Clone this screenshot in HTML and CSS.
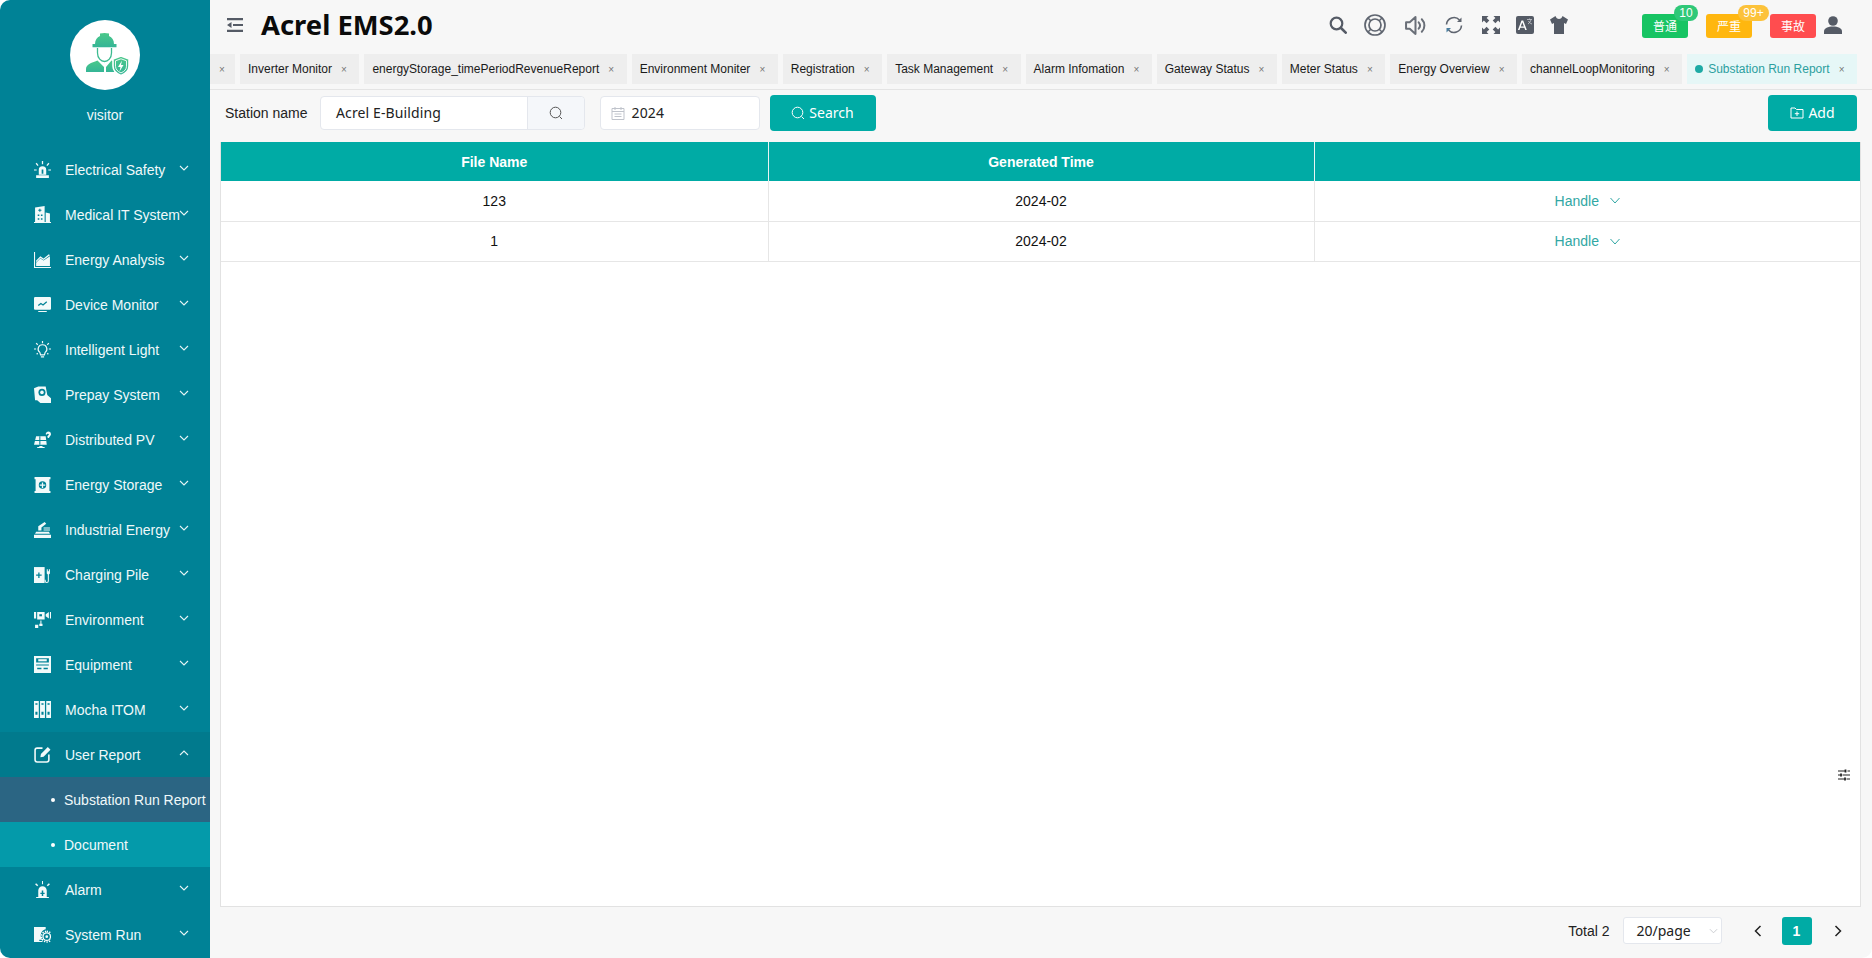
FILE: index.html
```html
<!DOCTYPE html>
<html lang="en">
<head>
<meta charset="utf-8">
<title>Acrel EMS2.0</title>
<link rel="stylesheet" href="styles.css">
</head>
<body>
<div class="app">
  <aside class="sidebar">
    <div class="profile">
      <div class="avatar">
        <svg width="70" height="70" viewBox="0 0 70 70">
          <defs><linearGradient id="ag" x1="0" y1="0" x2="0" y2="1"><stop offset="0" stop-color="#4bc98a"/><stop offset="1" stop-color="#35b596"/></linearGradient></defs>
          <path fill="url(#ag)" d="M25 24c0-4 2-6.500 5-8v-2.500c3-.8 6-.8 9 0V16c3 1.500 5 4 5 8h2.500v3.200h-24V24z"/>
          <path fill="none" stroke="#3cbb90" stroke-width="1.300" d="M27.500 28v5c0 5 3.500 8.500 7 8.500s7-3.500 7-8.500v-5"/>
          <path fill="url(#ag)" d="M16 52v-3c0-4.500 5-6 11.500-8.500L34 47v5zM36 52v-5l5.500-6.500 3 1V52z"/>
          <path fill="url(#ag)" stroke="#fff" stroke-width="1.600" d="M51 36l8 3v7c0 4.500-3 7.500-8 9.500-5-2-8-5-8-9.500v-7z"/>
          <path fill="none" stroke="#fff" stroke-width=".9" d="M51 38.800l5.500 2v5.400c0 3-2 5.200-5.500 6.700-3.500-1.500-5.500-3.700-5.500-6.700v-5.400z"/>
          <path fill="#fff" d="M52 40.500L48 47h2.500l-1 4.500 4-6.500H51z"/>
        </svg>
      </div>
      <div class="visitor">visitor</div>
    </div>
    <nav class="menu">
      <a class="item"><svg class="ico" viewBox="0 0 16 16"><path d="M4.500 13V8.500a3.500 3.500 0 017 0V13zM2 13.500h12V16H2zM7.400 0h1.200v3H7.400zM1.500 2.500l1-.8L4.300 4l-.9.800zM14.500 2.500l-1-.8L11.700 4l.9.800zM0 8h2.500v1H0zM13.500 8H16v1h-2.500z"/><path fill="#008296" d="M7.200 8h1.600v4H7.200z"/></svg><span class="label">Electrical Safety</span><svg class="chev" viewBox="0 0 10 6"><path d="M1 1l4 4 4-4"/></svg></a>
      <a class="item"><svg class="ico" viewBox="0 0 16 16"><path d="M1 15V1.500L10 0v15zM11 6l4 1v8h-4zM0 15h16v1H0z"/><path fill="#008296" d="M5 2.500h1v1h1v1H6v1H5v-1H4v-1h1zM3.500 8h1.500v1.500H3.500zM6.500 8H8v1.500H6.500zM3.500 11.500h1.500V13H3.500zM6.500 11.500H8V13H6.500z"/></svg><span class="label">Medical IT System</span><svg class="chev" viewBox="0 0 10 6"><path d="M1 1l4 4 4-4"/></svg></a>
      <a class="item"><svg class="ico" viewBox="0 0 16 16"><path d="M0 1h1v14h15v1H0zM2 14v-3l4-4 3 2 6-4v9zM2 9l4-4 3 2 5-4 1 1-6 4.500-3-2-4 4z"/></svg><span class="label">Energy Analysis</span><svg class="chev" viewBox="0 0 10 6"><path d="M1 1l4 4 4-4"/></svg></a>
      <a class="item"><svg class="ico" viewBox="0 0 16 16"><path d="M1 1h14a1 1 0 011 1v10a1 1 0 01-1 1H1a1 1 0 01-1-1V2a1 1 0 011-1zM4 14h8v1H4z"/><path fill="none" stroke="#008296" stroke-width="1.200" d="M4 9l2.500-2 2 1.500L12 5.500"/></svg><span class="label">Device Monitor</span><svg class="chev" viewBox="0 0 10 6"><path d="M1 1l4 4 4-4"/></svg></a>
      <a class="item"><svg class="ico line" viewBox="0 0 16 16"><path d="M8 3.500a4 4 0 00-2.500 7.200l.7 2.300h3.600l.7-2.300A4 4 0 008 3.500zM6.500 15h3M8 0v2M2 2l1.500 1.500M14 2l-1.500 1.500M0 7.500h2M14 7.500h2M2.500 12.500l1-1M13.500 12.500l-1-1"/></svg><span class="label">Intelligent Light</span><svg class="chev" viewBox="0 0 10 6"><path d="M1 1l4 4 4-4"/></svg></a>
      <a class="item"><svg class="ico" viewBox="0 0 16 16"><path d="M0 2l4-1.500h7l1.500 8 3.500 3V16H6l-3-2.500H1z"/><circle cx="7.500" cy="6" r="3.300" fill="#008296"/><circle cx="7.500" cy="6" r="1.700"/></svg><span class="label">Prepay System</span><svg class="chev" viewBox="0 0 10 6"><path d="M1 1l4 4 4-4"/></svg></a>
      <a class="item"><svg class="ico" viewBox="0 0 16 16"><path d="M2 5h9l1 8H0zM5 14h3v1h2v1H3v-1h2zM11 3a2.500 2.500 0 114 2l-1 1.500h-1L12.500 5l1.500-1.500a1 1 0 00-2 0z"/><path fill="none" stroke="#008296" d="M5.500 5v8M1 9h11"/></svg><span class="label">Distributed PV</span><svg class="chev" viewBox="0 0 10 6"><path d="M1 1l4 4 4-4"/></svg></a>
      <a class="item"><svg class="ico" viewBox="0 0 16 16"><path d="M.5 1h15v2h-1v11h1v2H.5v-2h1V3h-1z"/><circle cx="8" cy="8.500" r="3.500" fill="#008296"/><path d="M7.400 6h1.200v2h2v1.200h-2v2H7.400v-2h-2V8h2z"/></svg><span class="label">Energy Storage</span><svg class="chev" viewBox="0 0 10 6"><path d="M1 1l4 4 4-4"/></svg></a>
      <a class="item"><svg class="ico" viewBox="0 0 16 16"><path d="M0 16v-3h16v3zM1 12l1-2h12l1 2zM4 9V5l6-4 1.500 1.500L7 6v3zM9 6h6v1H9zM9 8h6v1H9z"/></svg><span class="label">Industrial Energy</span><svg class="chev" viewBox="0 0 10 6"><path d="M1 1l4 4 4-4"/></svg></a>
      <a class="item"><svg class="ico" viewBox="0 0 16 16"><path d="M0 1h10v15H0z"/><path fill="#008296" d="M2 8h2V6h1.200v2h2v1.200h-2v2H4v-2H2z"/><path d="M12 3h1v2h1V3h1v4l-1 1v6a2 2 0 01-4 0v-1h1v1a1 1 0 002 0V8l-1-1z"/></svg><span class="label">Charging Pile</span><svg class="chev" viewBox="0 0 10 6"><path d="M1 1l4 4 4-4"/></svg></a>
      <a class="item"><svg class="ico" viewBox="0 0 16 16"><path d="M0 1h2v6H0zM3 1h7v7H3zM11 3l3-2v6l-3-2zM15 1h1v6h-1zM6 9h1v3h-1zM1 13h3v3H1zM5 12h3v2H5z"/><path fill="#008296" d="M5 3h2.500v2H5z"/></svg><span class="label">Environment</span><svg class="chev" viewBox="0 0 10 6"><path d="M1 1l4 4 4-4"/></svg></a>
      <a class="item"><svg class="ico" viewBox="0 0 16 16"><path d="M0 0h16v16H0z"/><path fill="#008296" d="M2 2h12v4H2zM2 8h12v1H2zM3 11h4v1.500H3zM9 11h4v1.500H9z"/><path d="M4 3h8v2H4z"/></svg><span class="label">Equipment</span><svg class="chev" viewBox="0 0 10 6"><path d="M1 1l4 4 4-4"/></svg></a>
      <a class="item"><svg class="ico" viewBox="0 0 16 16"><path d="M0 0h4.500v16H0zM5.700 0h4.600v16H5.700zM11.500 0H16v16h-4.500z"/><path fill="#008296" d="M1.300 2h2v1.500h-2zM7 2h2v1.500H7zM12.700 2h2v1.500h-2zM1.300 10h2v3h-2zM7 10h2v3H7zM12.700 10h2v3h-2z"/></svg><span class="label">Mocha ITOM</span><svg class="chev" viewBox="0 0 10 6"><path d="M1 1l4 4 4-4"/></svg></a>
      <a class="item open"><svg class="ico line wide" viewBox="0 0 16 16"><path d="M8 2H3a2 2 0 00-2 2v9a2 2 0 002 2h9a2 2 0 002-2V8"/><path class="solid" d="M6 10.500l.5-3L13 1l2.500 2.500-6.500 6.500z"/></svg><span class="label">User Report</span><svg class="chev" viewBox="0 0 10 6"><path d="M1 5l4-4 4 4"/></svg></a>
      <a class="sub current"><i class="dot"></i>Substation Run Report</a>
      <a class="sub plain"><i class="dot"></i>Document</a>
      <a class="item"><svg class="ico" viewBox="0 0 16 16"><path d="M4 15V9a4 4 0 018 0v6zM2 15h12v1H2zM7.500 0h1v3h-1zM1 3l1-1 2 2-1 1zM15 3l-1-1-2 2 1 1z"/><path fill="#008296" d="M7.300 9h1.400v2H10v1.300H8.700V14H7.300v-1.700H6V11h1.300z"/></svg><span class="label">Alarm</span><svg class="chev" viewBox="0 0 10 6"><path d="M1 1l4 4 4-4"/></svg></a>
      <a class="item"><svg class="ico" viewBox="0 0 16 16"><path d="M0 1h11v2a6 6 0 00-3 10H5v1h3v1H0z"/><circle cx="12" cy="10" r="3.500" fill="none" stroke="#fff" stroke-width="1.200"/><circle cx="12" cy="10" r="1.300"/><path fill="none" stroke="#fff" stroke-dasharray="1.200 1.200" stroke-width="1.500" d="M12 5a5 5 0 110 10 5 5 0 010-10z"/></svg><span class="label">System Run</span><svg class="chev" viewBox="0 0 10 6"><path d="M1 1l4 4 4-4"/></svg></a>
    </nav>
  </aside>

  <main class="main">
    <header class="topbar">
      <svg class="fold" viewBox="0 0 16 14"><path d="M0 0h16v2.200H0zM6 5.900h10v2.200H6zM0 11.800h16V14H0zM4.500 4v6L0 7z"/></svg>
      <h1 class="title">Acrel EMS2.0</h1>
      <div class="tools">
        <svg class="tool t18" viewBox="0 0 18 18"><circle cx="7.500" cy="7.500" r="5.800" fill="none" stroke="#555b66" stroke-width="2.200"/><path fill="none" stroke="#555b66" stroke-width="2.600" stroke-linecap="round" d="M12 12l4.700 4.700"/></svg>
        <svg class="tool t22 g17" viewBox="0 0 22 22"><g fill="none" stroke="#5f6570" stroke-width="1.700"><circle cx="11" cy="11" r="10"/><circle cx="11" cy="11" r="6"/><path stroke-width="1.500" d="M4 4l3 3M18 4l-3 3M4 18l3-3M18 18l-3-3"/></g></svg>
        <svg class="tool t21 g19" viewBox="0 0 20 20"><g fill="none" stroke="#6a6f78" stroke-width="1.900" stroke-linejoin="round"><path d="M1 7v6h3.500L10 18V2L4.500 7z"/><path stroke-linecap="round" d="M13 7a4.500 4.500 0 010 6M16 4a8.500 8.500 0 010 12"/></g></svg>
        <svg class="tool t18 g19" viewBox="0 0 18 18"><g fill="none" stroke="#5f6570" stroke-width="1.600"><path d="M1.500 8.500A7.500 7.500 0 0114.500 4"/><path d="M16.500 9.500A7.500 7.500 0 013.500 14"/></g><path fill="#5f6570" d="M16.500 1.500v4.500h-4.500z"/><path fill="#4a7ea0" d="M1.500 16.500V12h4.500z"/></svg>
        <svg class="tool t18 g19" viewBox="0 0 18 18"><g fill="#555b66"><path d="M0 0h6.500L4.600 1.900l2.700 2.700-2.700 2.700-2.700-2.700L0 6.500zM18 0v6.500l-1.900-1.900-2.700 2.700-2.700-2.700 2.700-2.700L11.500 0zM0 18v-6.500l1.900 1.900 2.700-2.700 2.700 2.700-2.700 2.700L6.500 18zM18 18h-6.500l1.900-1.900-2.700-2.700 2.700-2.700 2.700 2.700 1.900-1.900z"/></g></svg>
        <svg class="tool t18 g16" viewBox="0 0 18 18"><rect width="18" height="18" rx="2" fill="#555b66"/><path fill="#fff" d="M5.500 4.500h1.700L10.800 14H9.200l-.8-2.300H4.300L3.500 14H1.900zM4.800 10.400h3.100L6.300 6.200z"/><path fill="none" stroke="#c9ccd1" stroke-width=".8" d="M11 3.500h5M13.500 2.500v1M12 8c1.500-1 2.500-2.500 3-4.500M12.500 5c.5 1.500 2 2.500 3.500 3"/></svg>
        <svg class="tool t18 g16" viewBox="0 0 18 18"><path fill="#555b66" d="M5.500 0L0 3.500l2 4.500 2-1v11h10V7l2 1 2-4.500L12.500 0C12 2 10.500 3 9 3S6 2 5.500 0z"/></svg>
        <div class="tag green">普通<span class="count cg">10</span></div>
        <div class="tag amber g18">严重<span class="count ca">99+</span></div>
        <div class="tag red g18">事故</div>
        <svg class="tool t18 g8" viewBox="0 0 18 18"><circle cx="9" cy="5" r="4.800" fill="#555b66"/><path fill="#555b66" d="M0 18v-2.500C0 12 4 10.500 9 10.500s9 1.500 9 5V18z"/></svg>
      </div>
    </header>

    <div class="tabs">
      <div class="tab stub"><span class="x">×</span></div>
      <div class="tab"><span>Inverter Monitor</span><span class="x">×</span></div>
      <div class="tab"><span>energyStorage_timePeriodRevenueReport</span><span class="x">×</span></div>
      <div class="tab"><span>Environment Moniter</span><span class="x">×</span></div>
      <div class="tab"><span>Registration</span><span class="x">×</span></div>
      <div class="tab"><span>Task Management</span><span class="x">×</span></div>
      <div class="tab"><span>Alarm Infomation</span><span class="x">×</span></div>
      <div class="tab"><span>Gateway Status</span><span class="x">×</span></div>
      <div class="tab"><span>Meter Status</span><span class="x">×</span></div>
      <div class="tab"><span>Energy Overview</span><span class="x">×</span></div>
      <div class="tab"><span>channelLoopMonitoring</span><span class="x">×</span></div>
      <div class="tab active"><i class="tabdot"></i><span>Substation Run Report</span><span class="x">×</span></div>
    </div>

    <section class="content">
      <div class="toolbar">
        <label class="field-label">Station name</label>
        <div class="search-input">
          <span class="value">Acrel E-Building</span>
          <span class="append"><svg class="s14" viewBox="0 0 14 14"><circle cx="6.500" cy="6.500" r="5.300"/><path d="M10.500 10.500l2.500 2.500"/></svg></span>
        </div>
        <div class="date-input">
          <svg class="cal" viewBox="0 0 14 14"><path d="M1 2.500h12v11H1zM1 5.500h12M4 1v3M10 1v3M3.500 8h7M3.500 10.500h7"/></svg>
          <span class="value">2024</span>
        </div>
        <button class="btn search"><svg class="s14 w" viewBox="0 0 14 14"><circle cx="6.500" cy="6.500" r="5.300"/><path d="M10.500 10.500l2.500 2.500"/></svg>Search</button>
        <button class="btn add"><svg class="s14 w" viewBox="0 0 14 14"><path d="M1 2h4l1.500 1.500H13V12H1zM7 5.500v4.500M4.800 7.700h4.400"/></svg>Add</button>
      </div>

      <div class="table-wrap">
        <table class="grid">
          <thead><tr><th class="col-file">File Name</th><th class="col-time">Generated Time</th><th></th></tr></thead>
          <tbody>
            <tr><td>123</td><td>2024-02</td><td><a class="handle">Handle<svg class="hchev" viewBox="0 0 10 7"><path d="M.5 1l4.500 5 4.500-5"/></svg></a></td></tr>
            <tr><td>1</td><td>2024-02</td><td><a class="handle">Handle<svg class="hchev" viewBox="0 0 10 7"><path d="M.5 1l4.500 5 4.500-5"/></svg></a></td></tr>
          </tbody>
        </table>
        <svg class="sliders" viewBox="0 0 12 12"><path d="M0 2h7M9.500 2H12M0 6h2M4.500 6H12M0 10h6M8.500 10H12"/><path d="M7.500 .5v3M3 4.500v3M7 8.500v3" stroke-width="1.800"/></svg>
      </div>

      <footer class="pager">
        <span class="total">Total 2</span>
        <div class="size">20/page<svg class="size-chev" viewBox="0 0 10 6"><path d="M1 1l4 4 4-4"/></svg></div>
        <svg class="arrow" viewBox="0 0 8 12"><path d="M6.500 1l-5 5 5 5"/></svg>
        <span class="page">1</span>
        <svg class="arrow" viewBox="0 0 8 12"><path d="M1.500 1l5 5-5 5"/></svg>
      </footer>
    </section>
  </main>
</div>
</body>
</html>
```
FILE: styles.css
```css
* { box-sizing: border-box; }
html, body { margin: 0; height: 958px; overflow: hidden; background: #fff; }
body { font-family: "Liberation Sans", Arial, sans-serif; font-size: 14px; color: #111; }
.app { display: flex; width: 1872px; height: 958px; overflow: hidden; }

.sidebar { width: 210px; flex: none; background: #008296; color: #fff; border-radius: 10px 0 0 10px; overflow: hidden; display: flex; flex-direction: column; }
.profile { height: 147px; flex: none; display: flex; flex-direction: column; align-items: center; padding-top: 20px; }
.avatar { width: 70px; height: 70px; border-radius: 50%; background: #fff; flex: none; }
.avatar svg { display: block; }
.visitor { margin-top: 17px; line-height: 17px; font-size: 14px; color: #eef8f9; }
.menu { display: flex; flex-direction: column; }
.item { height: 45px; flex: none; display: flex; align-items: center; padding: 0 21px 0 34px; }
.item.open { background: #017a8d; }
.ico { width: 17px; height: 17px; flex: none; fill: #f2fafa; margin-right: 14px; }
.ico.line { fill: none; stroke: #f2fafa; stroke-width: 1.100; }
.ico.wide { stroke-width: 1.500; }
.ico .solid { fill: #f2fafa; stroke: none; }
.label { flex: 1; min-width: 0; white-space: nowrap; font-size: 14px; color: #f0f9fa; }
.chev { width: 10px; height: 6px; flex: none; fill: none; stroke: #e6f4f5; stroke-width: 1.100; margin-bottom: 4px; }
.sub { height: 45px; flex: none; display: flex; align-items: center; padding-left: 51px; white-space: nowrap; font-size: 14px; color: #f0f9fa; background: #049aaa; }
.sub.current { background: #2b6583; }
.dot { width: 4px; height: 4px; border-radius: 50%; background: #fff; margin-right: 9px; flex: none; }

.main { flex: 1; min-width: 0; display: flex; flex-direction: column; background: #f7f7f7; border-radius: 0 0 10px 0; overflow: hidden; }
.topbar { height: 54px; flex: none; display: flex; align-items: center; padding: 0 30px 4px 17px; }
.fold { width: 16px; height: 14px; fill: #555b66; flex: none; }
.title { margin: 0 0 0 18px; font: 700 27.4px/38px "Noto Sans", "Noto Sans CJK SC", sans-serif; color: #0b0b0b; }
.tools { margin-left: auto; display: flex; align-items: center; }
.tool { flex: none; display: block; }
.t18 { width: 18px; height: 18px; }
.t21 { width: 21px; height: 21px; }
.t22 { width: 22px; height: 22px; }
.g8 { margin-left: 8px; }
.g16 { margin-left: 16px; }
.g17 { margin-left: 17px; }
.g18 { margin-left: 18px; }
.g19 { margin-left: 19px; }
.tag { position: relative; width: 46px; height: 24px; border-radius: 3px; color: #fff; font: 12px/24px "Noto Sans CJK SC", sans-serif; text-align: center; margin-top: 2px; }
.tag.green { background: #17c463; margin-left: 74px; }
.tag.amber { background: #ffb70f; }
.tag.red { background: #ff4d4f; }
.count { position: absolute; top: -9px; height: 16px; border-radius: 8px; font: 12px/16px "Liberation Sans", sans-serif; color: #fff; text-align: center; }
.cg { left: 32px; width: 24px; background: #2fc878; }
.ca { left: 32px; width: 31px; background: #fcc23a; }

.tabs { height: 36px; flex: none; display: flex; gap: 5px; border-bottom: 1px solid #e4e4e4; overflow: hidden; }
.tab { height: 30px; flex: none; display: flex; align-items: center; padding: 0 9.4px 0 8px; background: #eeeeee; font-size: 12px; color: #1a1a1a; white-space: nowrap; }
.tab .x { width: 12px; margin-left: 6px; text-align: center; color: #777; font-size: 10px; }
.tab.stub { width: 25px; padding: 0 0 0 6px; }
.tab.stub .x { margin-left: 0; }
.tab.active { background: #e6f7f7; color: #2c9f9f; }
.tabdot { width: 8px; height: 8px; border-radius: 50%; background: #1eaaa5; margin-right: 5px; flex: none; }

.content { flex: 1; min-height: 0; display: flex; flex-direction: column; padding: 0 11px 0 10px; }
.toolbar { height: 52px; flex: none; display: flex; align-items: center; padding: 0 4px 6px 5px; }
.field-label { font-size: 14px; color: #222; margin-right: 12px; }
.search-input { width: 265px; height: 34px; display: flex; background: #fff; border: 1px solid #e4e7ed; border-radius: 4px; }
.value { font: 14px/32px "Noto Sans", "Noto Sans CJK SC", sans-serif; color: #222; letter-spacing: .12px; }
.search-input .value { flex: 1; padding-left: 15.5px; }
.append { width: 57px; flex: none; display: flex; align-items: center; justify-content: center; background: #f5f7fa; border-left: 1px solid #e4e7ed; border-radius: 0 4px 4px 0; }
.s14 { width: 14px; height: 14px; flex: none; fill: none; stroke: #555; stroke-width: 1; }
.s14.w { stroke: #fff; margin-right: 4px; }
.date-input { width: 160px; height: 34px; margin-left: 15px; display: flex; align-items: center; padding-left: 10px; background: #fff; border: 1px solid #e4e7ed; border-radius: 4px; }
.cal { width: 14px; height: 14px; margin-right: 7px; fill: none; stroke: #bfc3cb; stroke-width: 1; flex: none; }
.btn { height: 36px; display: flex; align-items: center; justify-content: center; border: 0; border-radius: 4px; background: #00aba5; color: #fff; font: 14px/20px "Noto Sans", "Noto Sans CJK SC", sans-serif; padding: 0 0 1px; }
.search { width: 106px; margin-left: 10px; }
.add { width: 89px; margin-left: auto; }

.table-wrap { position: relative; flex: 1; min-height: 0; background: #fff; border: solid #e2e2e2; border-width: 0 1px 1px 1px; }
.grid { width: 100%; table-layout: fixed; border-collapse: collapse; }
.grid th { height: 39px; padding: 0; background: #00aba5; color: #fff; font-size: 14px; font-weight: 700; border-right: 1px solid #e8f4f4; }
.grid th:last-child { border-right: 0; }
.col-file { width: 547px; }
.col-time { width: 546px; }
.grid td { height: 40px; padding: 0; text-align: center; font-size: 14px; color: #111; border-right: 1px solid #e6e6e6; border-bottom: 1px solid #e6e6e6; }
.grid td:last-child { border-right: 0; }
.handle { display: inline-flex; align-items: center; color: #31a7a4; }
.hchev { width: 10px; height: 7px; margin-left: 11px; fill: none; stroke: #31a7a4; stroke-width: 1; }
.sliders { position: absolute; right: 10px; top: 627px; width: 12px; height: 12px; fill: none; stroke: #222; stroke-width: 1.200; }

.pager { height: 51px; flex: none; display: flex; align-items: center; padding-bottom: 4px; justify-content: flex-end; }
.total { font-size: 14px; color: #222; margin-right: 13px; }
.size { width: 99px; height: 27px; display: flex; align-items: center; padding-left: 13px; background: #fff; border: 1px solid #e4e7ed; border-radius: 3px; font: 14px "Noto Sans", "Noto Sans CJK SC", sans-serif; color: #222; position: relative; }
.size-chev { width: 9px; height: 6px; margin-left: 18px; fill: none; stroke: #c4c7cc; stroke-width: 1; }
.arrow { width: 8px; height: 12px; fill: none; stroke: #222; stroke-width: 1.500; }
.size + .arrow { margin-left: 32px; }
.page { width: 30px; height: 28px; margin: 0 22.5px 0 20px; border-radius: 3px; background: #00aba5; color: #fff; font-weight: 700; font-size: 14px; line-height: 28px; text-align: center; }
.pager .arrow:last-child { margin-right: 19px; }
```
